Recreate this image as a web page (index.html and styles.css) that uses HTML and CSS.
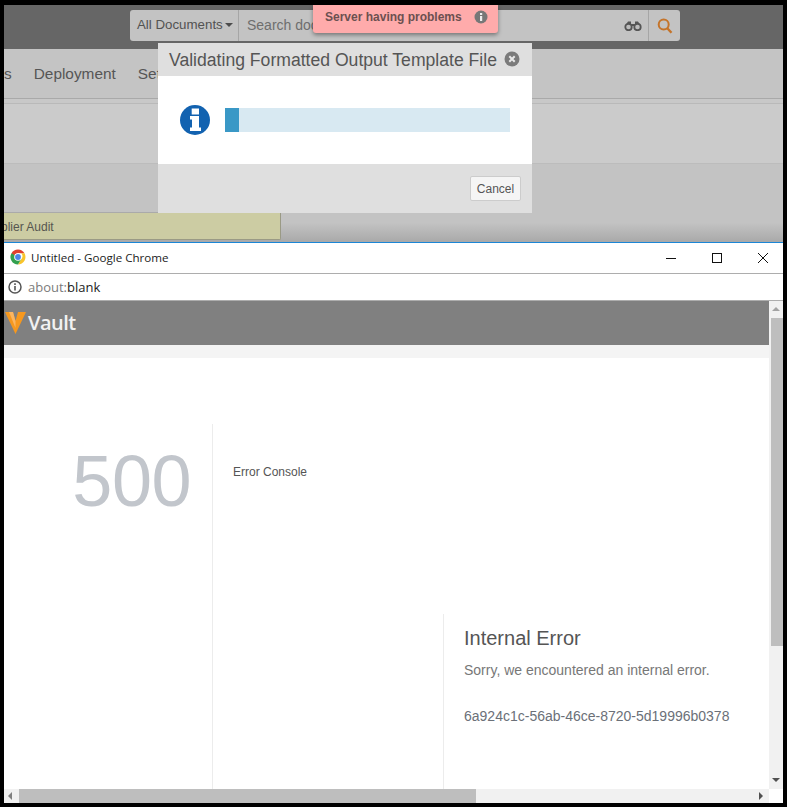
FILE: index.html
```html
<!DOCTYPE html>
<html lang="en">
<head>
<meta charset="utf-8">
<title>Vault</title>
<link rel="stylesheet" href="styles.css">
</head>
<body>
<div class="frame">
  <section class="app">
    <header class="topbar">
      <div class="search">
        <div class="scope"><span class="scope-label">All Documents</span><span class="caret"></span></div>
        <div class="search-input">
          <span class="placeholder">Search doc</span>
          <svg class="binoculars" width="18" height="10" viewBox="0 0 18 10"><path d="M4 .5h3V3h4V.5h3L17 5H1z" fill="#555"/><circle cx="4.500" cy="6" r="3.200" fill="#bdbdbd" stroke="#555" stroke-width="1.800"/><circle cx="13.500" cy="6" r="3.200" fill="#bdbdbd" stroke="#555" stroke-width="1.800"/></svg>
        </div>
        <div class="search-btn">
          <svg width="16" height="16" viewBox="0 0 16 16"><circle cx="6.700" cy="6.500" r="5" fill="none" stroke="#c5742a" stroke-width="2"/><path d="M10.300 10.200l4.200 4.600" stroke="#c5742a" stroke-width="2.400" fill="none"/></svg>
        </div>
      </div>
    </header>
    <nav class="nav"><div class="nav-items"><span class="nav-cut">s</span><span>Deployment</span><span class="nav-cut-end">Set</span></div></nav>
    <div class="strip"></div>
    <div class="band"></div>
    <div class="lower">
      <div class="tab"><span class="tab-label">plier Audit</span></div>
    </div>

    <div class="toast">
      <span class="toast-text">Server having problems</span>
      <svg width="14" height="14" viewBox="0 0 14 14"><circle cx="7" cy="7" r="6.500" fill="#777"/><rect x="6" y="6" width="2.200" height="5" fill="#eee"/><rect x="6" y="3" width="2.200" height="2" fill="#eee"/></svg>
    </div>

    <div class="dialog">
      <div class="dialog-head">
        <span class="dialog-title">Validating Formatted Output Template File</span>
        <svg class="dialog-close" width="16" height="16" viewBox="0 0 16 16"><circle cx="8" cy="8" r="7.500" fill="#7b7b7b"/><path d="M5.300 5.300l5.400 5.400M10.700 5.300l-5.400 5.400" stroke="#e8e8e8" stroke-width="2"/></svg>
      </div>
      <div class="dialog-body">
        <svg width="30" height="30" viewBox="0 0 30 30"><circle cx="15" cy="15" r="15" fill="#1262b0"/><rect x="11.700" y="3.500" width="7.300" height="6" fill="#fff"/><path d="M10 11h9v11.500h2V26H10v-3.500h2v-8h-2z" fill="#fff"/></svg>
        <div class="progress"><div class="progress-fill"></div></div>
      </div>
      <div class="dialog-foot"><button class="cancel" type="button">Cancel</button></div>
    </div>
  </section>

  <section class="window">
    <div class="titlebar">
      <svg class="chrome" width="16" height="16" viewBox="0 0 16 16">
        <path d="M8 .5a7.500 7.500 0 0 1 6.500 3.800H8z" fill="#e0402f"/>
        <path d="M1.500 4.200A7.500 7.500 0 0 1 8 .5v3.800a3.700 3.700 0 0 0-3.200 1.900L3.300 9z" fill="#e0402f"/>
        <path d="M14.500 4.300A7.500 7.500 0 0 1 8 15.500l3.200-5.500a3.700 3.700 0 0 0 0-5.700z" fill="#f8c42c"/>
        <path d="M1.500 4.200A7.500 7.500 0 0 0 8 15.500l3.200-5.500L5 6.300z" fill="#33a04f"/>
        <circle cx="8" cy="8" r="3.800" fill="#fff"/>
        <circle cx="8" cy="8" r="2.900" fill="#4b84e8"/>
      </svg>
      <span class="title">Untitled - Google Chrome</span>
      <div class="controls">
        <svg width="12" height="12" viewBox="0 0 12 12"><path d="M1 6.500h10" stroke="#111" stroke-width="1"/></svg>
        <svg width="12" height="12" viewBox="0 0 12 12"><rect x="1.500" y="1.500" width="9" height="9" fill="none" stroke="#111" stroke-width="1"/></svg>
        <svg width="12" height="12" viewBox="0 0 12 12"><path d="M1 1l10 10M11 1L1 11" stroke="#111" stroke-width="1"/></svg>
      </div>
    </div>
    <div class="urlbar">
      <svg width="14" height="14" viewBox="0 0 14 14"><circle cx="7" cy="7" r="6" fill="none" stroke="#555" stroke-width="1.500"/><path d="M7 6v4.500M7 3.300v1.700" stroke="#555" stroke-width="1.600"/></svg>
      <span class="url"><span class="url-dim">about:</span>blank</span>
    </div>
    <div class="viewport">
      <div class="page">
        <div class="vault-bar">
          <svg width="21" height="22" viewBox="0 0 21 22"><path d="M0 0h8l2.500 9L13 0h8L10.500 22z" fill="#f6981e"/><path d="M4 0h4l2.500 9v7z" fill="#fbb560"/></svg>
          <span class="vault-name">Vault</span>
        </div>
        <div class="sub-bar"></div>
        <div class="error">
          <div class="code-col"><span class="code">500</span></div>
          <div class="detail-col">
            <div class="console">Error Console</div>
            <div class="message">
              <h1 class="msg-title">Internal Error</h1>
              <p class="msg-text">Sorry, we encountered an internal error.</p>
              <p class="msg-id">6a924c1c-56ab-46ce-8720-5d19996b0378</p>
            </div>
          </div>
        </div>
      </div>
      <div class="vscroll">
        <span class="arrow arrow-up"></span>
        <div class="vtrack"><div class="vthumb"></div></div>
        <span class="arrow arrow-down"></span>
      </div>
      <div class="hscroll">
        <span class="arrow arrow-left"></span>
        <div class="htrack"><div class="hthumb"></div></div>
        <span class="arrow arrow-right"></span>
      </div>
      <div class="corner"></div>
    </div>
  </section>
</div>
</body>
</html>
```
FILE: styles.css
```css
* { box-sizing: border-box; }
html, body { margin: 0; padding: 0; background: #000; }
body { width: 787px; height: 807px; overflow: hidden; font-family: "Liberation Sans", Arial, sans-serif; }
.frame { width: 787px; height: 807px; padding: 5px 4px 4px; display: flex; flex-direction: column; }

.app { position: relative; height: 237px; overflow: hidden; display: flex; flex-direction: column; background: #c3c3c3; }
.topbar { height: 44px; background: #666; padding: 5px 0 0 126px; }
.search { width: 550px; height: 31px; background: #c3c3c3; border-radius: 3px; display: flex; font-size: 14px; color: #555; }
.scope { width: 109px; padding: 0 0 2px 7px; display: flex; align-items: center; border-right: 1px solid #a6a6a6; color: #525252; white-space: nowrap; }
.scope-label { font-size: 13.300px; }
.caret { margin: 1px 0 0 2px; border: 4px solid transparent; border-top-color: #4c4c4c; border-bottom: 0; }
.search-input { flex: 1; display: flex; align-items: center; justify-content: space-between; padding: 0 6px 0 8px; color: #6e6e6e; }
.placeholder { padding-bottom: 1px; }
.binoculars { display: block; }
.search-btn { width: 32px; border-left: 1px solid #a6a6a6; display: flex; align-items: center; justify-content: center; }
.nav { height: 50px; background: #c4c4c4; border-bottom: 1px solid #a9a9a9; overflow: hidden; }
.nav-items { display: flex; gap: 22px; height: 49px; align-items: center; font-size: 15.400px; color: #565656; }
.strip { height: 5px; background: #c8c8c8; border-bottom: 1px solid #b9b9b9; }
.band { height: 60px; background: #cbcbcb; border-bottom: 1px solid #bcbcbc; }
.lower { flex: 1; background: linear-gradient(#c3c3c3 0 75%, #a9a9a9); }
.tab { margin-top: 48px; width: 277px; height: 28px; background: #cccca3; border-right: 1px solid #9a9a85; border-bottom: 1px solid #9a9a85; border-top: 1px solid #aaa; border-radius: 0 0 2px 0; overflow: hidden; font-size: 12px; color: #565650; display: flex; align-items: center; padding-top: 1px; }
.tab-label { white-space: nowrap; margin-left: -3px; }

.toast { position: absolute; left: 309px; top: 0; width: 185px; height: 28px; background: #ffabab; border-radius: 0 0 3px 3px; box-shadow: 0 2px 4px rgba(0,0,0,.4); display: flex; align-items: flex-start; padding: 5px 0 0 12px; gap: 12px; font-size: 12px; font-weight: bold; color: #6b5050; }
.toast-text { white-space: nowrap; }

.dialog { position: absolute; left: 154px; top: 38px; width: 374px; height: 170px; display: flex; flex-direction: column; background: #fff; }
.dialog-head { height: 33px; background: #dfdfdf; display: flex; align-items: center; justify-content: space-between; padding: 0 12px 0 11px; }
.dialog-title { font-size: 17.600px; color: #555; white-space: nowrap; padding-top: 2px; }
.dialog-close { margin-bottom: 1px; }
.dialog-body { height: 88px; display: flex; align-items: center; padding: 0 22px 0 22px; gap: 15px; }
.progress { flex: 1; height: 24px; background: #d8e9f2; }
.progress-fill { width: 14px; height: 24px; background: #3a98c6; }
.dialog-foot { flex: 1; background: #dfdfdf; display: flex; justify-content: flex-end; align-items: flex-start; padding: 12px 11px 0 0; }
.cancel { width: 51px; height: 25px; padding: 0; border: 1px solid #ccc; border-radius: 2px; background: #f5f5f5; font: 12px "Liberation Sans", Arial, sans-serif; color: #555; }

.window { flex: 1; display: flex; flex-direction: column; background: #fff; border-top: 1px solid #1b86d6; min-height: 0; }
.titlebar { height: 31px; display: flex; align-items: center; padding-left: 6px; border-bottom: 1px solid #adadad; color: #222; }
.chrome { display: block; margin-bottom: 2px; }
.title { margin-left: 5px; padding-bottom: 2px; font-family: "Open Sans", sans-serif; font-size: 11.600px; }
.controls { margin-left: auto; display: flex; gap: 34px; padding-right: 14px; }
.urlbar { height: 27px; display: flex; align-items: center; padding-left: 4px; gap: 6px; border-bottom: 1px solid #adadad; font-family: "Open Sans", sans-serif; font-size: 13px; color: #222; }
.url-dim { color: #7b7b7b; }
.viewport { flex: 1; min-height: 0; display: grid; grid-template-columns: 765px 14px; grid-template-rows: 488px 14px; }
.page { overflow: hidden; display: flex; flex-direction: column; background: #fff; }
.vault-bar { height: 44px; flex: none; background: #808080; display: flex; align-items: center; padding: 0 0 0 1px; }
.vault-name { margin-left: 2px; padding-bottom: 1px; font-family: "Open Sans", sans-serif; font-size: 20px; font-weight: 600; color: #f2f2f2; letter-spacing: -.5px; }
.sub-bar { height: 13px; flex: none; background: #f4f4f4; }
.error { flex: 1; padding-top: 66px; display: flex; min-height: 0; }
.code-col { width: 209px; border-right: 1px solid #ececec; display: flex; justify-content: flex-end; padding: 16px 21px 0 0; }
.code { font-size: 72px; line-height: 83px; color: #c2c6cc; letter-spacing: -.5px; }
.detail-col { flex: 1; padding: 40px 0 0 20px; display: flex; flex-direction: column; }
.console { font-size: 12px; line-height: 16px; color: #555; }
.message { margin: 134px 0 0 210px; flex: 1; border-left: 1px solid #ececec; padding: 12px 0 0 20px; }
.msg-title { margin: 0; font-size: 20px; line-height: 24px; font-weight: normal; color: #555; }
.msg-text { margin: 11px 0 0; font-size: 14px; line-height: 18px; color: #777; }
.msg-id { margin: 28px 0 0; font-size: 14px; line-height: 18px; color: #6b7078; }

.vscroll { background: #f1f1f1; display: flex; flex-direction: column; align-items: center; }
.vtrack { flex: 1; width: 100%; padding-left: 2px; }
.vthumb { height: 328px; background: #bebebe; }
.hscroll { background: #f1f1f1; display: flex; align-items: center; }
.htrack { flex: 1; height: 100%; }
.hthumb { width: 457px; height: 100%; background: #bebebe; }
.corner { background: #fff; }
.arrow { flex: none; width: 0; height: 0; border: 4px solid transparent; }
.arrow-up { margin: 6px 0 7px; border-top: 0; border-bottom-color: #a3a3a3; }
.arrow-down { margin: 6px 0 7px; border-bottom: 0; border-top-color: #505050; }
.arrow-left { margin: 0 7px 0 4px; border-left: 0; border-right-color: #808080; }
.arrow-right { margin: 0 6px 0 5px; border-right: 0; border-left-color: #505050; }
```
